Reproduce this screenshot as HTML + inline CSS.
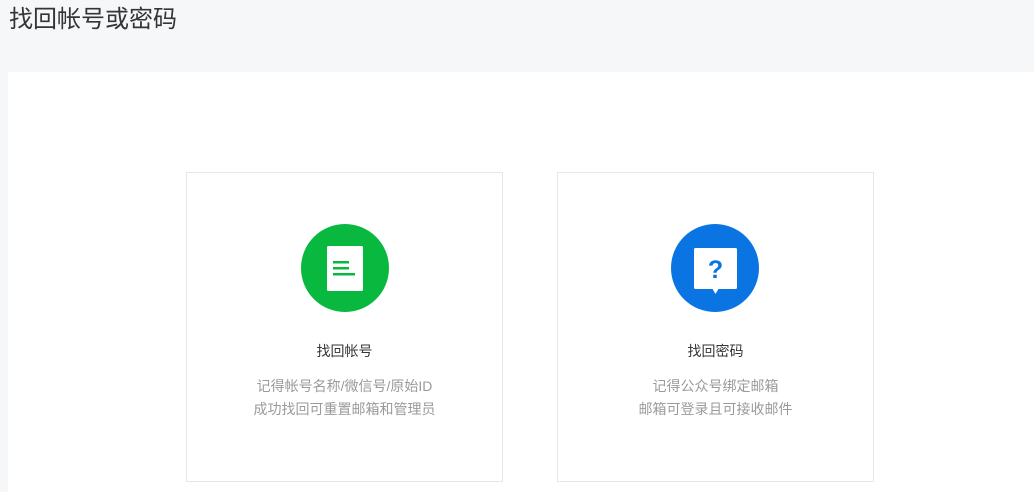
<!DOCTYPE html>
<html><head><meta charset="utf-8"><style>
*{margin:0;padding:0;box-sizing:border-box}
body{width:1034px;height:485px;background:#f6f7f9;font-family:"Liberation Sans","Noto Sans CJK SC",sans-serif;position:relative;overflow:hidden}
h1{position:absolute;left:9px;top:3px;font-size:24px;font-weight:normal;color:#353535;line-height:34px}
.panel{position:absolute;left:8px;top:72px;width:1030px;height:420px;background:#fff;border-radius:2px}
.card{position:absolute;top:172px;width:317px;height:310px;border:1px solid #e4e8eb;background:#fff;text-align:center}
.circ{position:absolute;left:114px;top:51px;width:88px;height:88px;border-radius:50%}
.t{position:absolute;left:0;right:0;top:168px;font-size:14px;color:#353535}
.d{position:absolute;left:0;right:0;top:202px;font-size:14px;color:#9a9a9a;line-height:23px}
</style></head><body>
<h1>找回帐号或密码</h1>
<div class="panel"></div>
<div class="card" style="left:186px">
<div class="circ" style="background:#09b83e">
<svg width="88" height="88" viewBox="0 0 88 88"><rect x="26" y="22" width="36" height="45" rx="1.5" fill="#fff"/><rect x="32" y="37" width="16" height="2.5" fill="#09b83e"/><rect x="32" y="43" width="16" height="2.5" fill="#09b83e"/><rect x="32" y="49" width="22" height="2.5" fill="#09b83e"/></svg>
</div>
<div class="t">找回帐号</div>
<div class="d">记得帐号名称/微信号/原始ID<br>成功找回可重置邮箱和管理员</div>
</div>
<div class="card" style="left:557px">
<div class="circ" style="background:#0a74e3;left:113px">
<svg width="88" height="88" viewBox="0 0 88 88"><rect x="23" y="24" width="43" height="41" rx="1.5" fill="#fff"/><path d="M41 64 L44.5 70 L48 64Z" fill="#fff"/><text x="44.5" y="54" text-anchor="middle" font-size="25" font-weight="bold" font-family="Liberation Sans" fill="#0a74e3">?</text></svg>
</div>
<div class="t">找回密码</div>
<div class="d">记得公众号绑定邮箱<br>邮箱可登录且可接收邮件</div>
</div>
</body></html>
